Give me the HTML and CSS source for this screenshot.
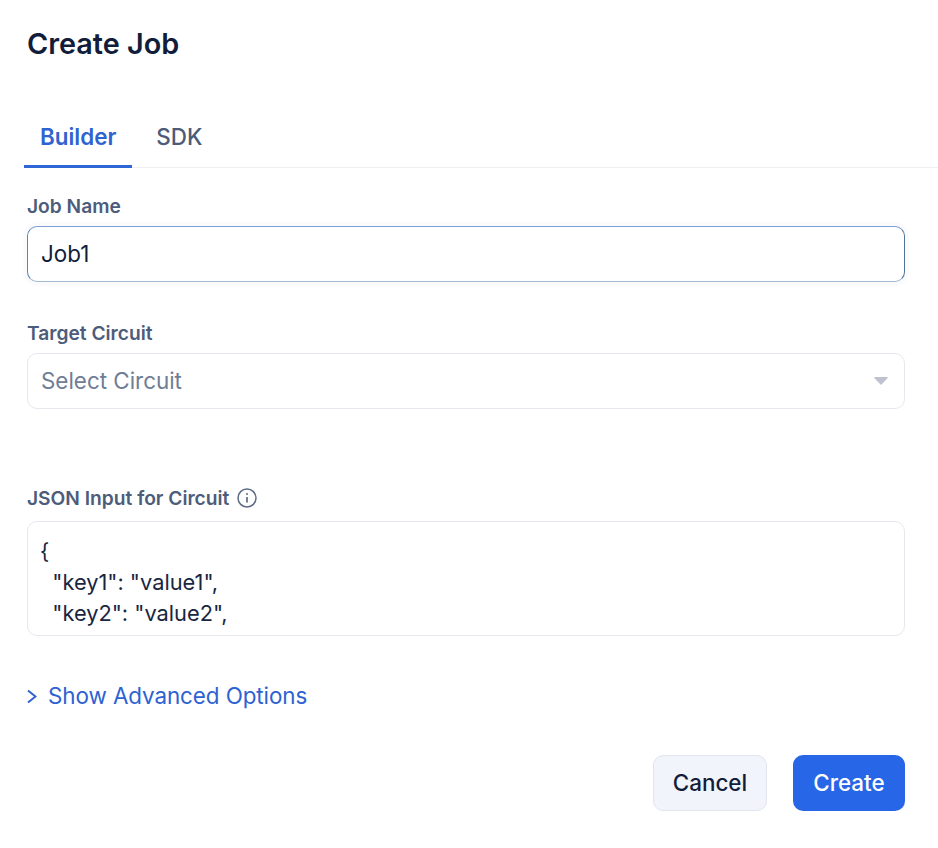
FILE: index.html
```html
<!DOCTYPE html>
<html lang="en">
<head>
<meta charset="utf-8">
<title>Create Job</title>
<link rel="stylesheet" href="styles.css">
</head>
<body>
<main class="dialog">
  <h1 class="title">Create Job</h1>
  <nav class="tabs">
    <button class="tab active" type="button">Builder</button>
    <button class="tab" type="button">SDK</button>
  </nav>
  <form class="form">
    <div class="field job-field">
      <label class="label" for="job">Job Name</label>
      <input class="control focused" id="job" value="Job1">
    </div>
    <div class="field circuit-field">
      <label class="label">Target Circuit</label>
      <div class="control select">
        <span class="placeholder">Select Circuit</span>
        <svg class="caret" width="14" height="8" viewBox="0 0 14 8"><path d="M1 0h12a0.700 0.700 0 0 1 .5 1.200L7.500 7.500a0.700 0.700 0 0 1-1 0L.5 1.200A0.700 0.700 0 0 1 1 0z" fill="#bfc2ce"/></svg>
      </div>
    </div>
    <div class="field json-field">
      <label class="label json-label" for="json">JSON Input for Circuit
        <svg class="info" width="20" height="20" viewBox="0 0 20 20" fill="none" stroke="#5d6b85" stroke-width="1.500"><circle cx="10" cy="10" r="9"/><path d="M10 9v5.500" stroke-width="1.700"/><circle cx="10" cy="6" r="1" fill="#5d6b85" stroke="none"/></svg>
      </label>
      <textarea class="control json" id="json" spellcheck="false">{
  "key1": "value1",
  "key2": "value2",
}</textarea>
    </div>
    <button class="advanced" type="button">
      <svg width="10" height="15" viewBox="0 0 10 15" fill="none" stroke="#2d62d2" stroke-width="2"><path d="M1 1.500L8.500 7.500 1 13.500"/></svg>
      <span>Show Advanced Options</span>
    </button>
    <div class="actions">
      <button class="btn cancel" type="button">Cancel</button>
      <button class="btn create" type="button">Create</button>
    </div>
  </form>
</main>
</body>
</html>
```
FILE: styles.css
```css
* { box-sizing: border-box; }
html, body { margin: 0; background: #fff; }
body { font-family: Inter, "Liberation Sans", sans-serif; color: #0f1b35; }
.dialog { width: 938px; height: 848px; padding: 24px 33px 0 27px; }
.title { margin: 0; font-size: 28.8px; line-height: 40px; font-weight: 600; color: #111d3a; }
.tabs { display: flex; gap: 8px; margin: 44px -33px 0 -3px; border-bottom: 1px solid #eef0f4; height: 60px; }
.tab { border: 0; background: none; padding: 0 16px; height: 60px; font: 500 22.4px/30px Inter, "Liberation Sans", sans-serif; color: #4b5b78; border-bottom: 3px solid transparent; }
.tab.active { color: #2f63d0; font-weight: 600; border-bottom-color: #2f66d6; }
.form { display: flex; flex-direction: column; }
.field { display: flex; flex-direction: column; }
.job-field { margin-top: 25px; }
.circuit-field { margin-top: 38px; }
.json-field { margin-top: 76px; }
.label { display: flex; align-items: center; gap: 8px; height: 26px; margin-bottom: 7px; font-size: 19.2px; line-height: 26px; font-weight: 600; color: #4d5c7a; }
.json-label { margin-bottom: 10px; }
.control { width: 878px; height: 56px; padding: 0 13px; border: 1px solid #e6e8ee; border-radius: 10px; background: #fff; font: 400 22.4px/30px Inter, "Liberation Sans", sans-serif; color: #111d3a; outline: 0; }
.focused { padding-bottom: 2px; border-color: #7f9fd8 #4f7398 #a3b9d2 #5f82ba; box-shadow: 0 0 0 4px #fbfbfd; }
.select { display: flex; align-items: center; justify-content: space-between; padding-right: 16px; }
.placeholder { color: #6f7d95; }
.json { display: block; height: 115px; padding: 14px 12px 0; font-size: 21.8px; line-height: 31px; overflow: hidden; resize: none; color: #1a2640; }
.advanced { display: flex; align-items: center; gap: 11px; width: max-content; margin-top: 45px; padding: 0; height: 30px; border: 0; background: none; font: 400 22.4px/30px Inter, "Liberation Sans", sans-serif; letter-spacing: -0.07px; color: #2d62d2; }
.actions { display: flex; justify-content: flex-end; gap: 26px; margin-top: 44px; }
.btn { height: 56px; border-radius: 10px; font: 500 22.4px/30px Inter, "Liberation Sans", sans-serif; }
.cancel { width: 114px; background: #f1f4fb; border: 1px solid #e2e5ee; color: #111d3a; }
.create { width: 112px; background: #2866e8; border: 0; color: #fff; }
```
